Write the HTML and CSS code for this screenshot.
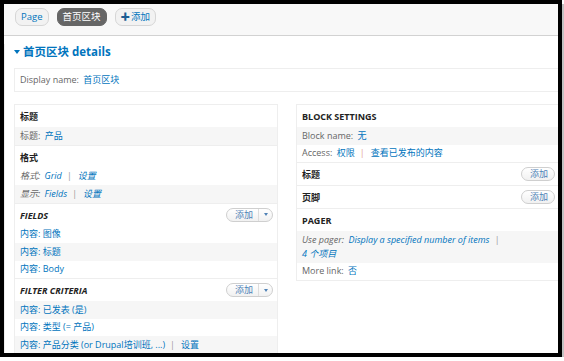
FILE: index.html
```html
<!DOCTYPE html>
<html lang="zh-CN">
<head>
  <meta charset="UTF-8">
  <meta name="viewport" content="width=device-width, initial-scale=1.0">
  <title>首页区块 - Views</title>
  <link rel="stylesheet" href="styles.css">
</head>
<body>
  <div class="frame">
    <div class="tabs">
      <a href="#" class="tab">Page</a>
      <a href="#" class="tab active">首页区块</a>
      <a href="#" class="tab add"><span class="plus">✚</span>添加</a>
    </div>

    <div class="main">
      <h2 class="details-title"><span class="caret"></span>首页区块 details</h2>
      <div class="display-name"><span class="label">Display name:</span> <a href="#">首页区块</a></div>

      <div class="columns">
        <div class="column">
          <div class="section">
            <div class="section-head"><span class="title">标题</span></div>
            <div class="row shade"><span class="label">标题:</span> <a href="#">产品</a></div>
          </div>
          <div class="section">
            <div class="section-head"><span class="title">格式</span></div>
            <div class="row em"><span class="label">格式:</span> <a href="#">Grid</a><span class="sep">|</span><a href="#">设置</a></div>
            <div class="row em shade"><span class="label">显示:</span> <a href="#">Fields</a><span class="sep">|</span><a href="#">设置</a></div>
          </div>
          <div class="section">
            <div class="section-head em">
              <span class="title">FIELDS</span>
              <div class="dropbutton"><a href="#">添加</a><span class="toggle"></span></div>
            </div>
            <div class="row"><a href="#">内容: 图像</a></div>
            <div class="row shade"><a href="#">内容: 标题</a></div>
            <div class="row"><a href="#">内容: Body</a></div>
          </div>
          <div class="section">
            <div class="section-head em">
              <span class="title">FILTER CRITERIA</span>
              <div class="dropbutton"><a href="#">添加</a><span class="toggle"></span></div>
            </div>
            <div class="row shade"><a href="#">内容: 已发表 (是)</a></div>
            <div class="row"><a href="#">内容: 类型 (= 产品)</a></div>
            <div class="row shade"><a href="#">内容: 产品分类 (or Drupal培训班, ...)</a><span class="sep">|</span><a href="#">设置</a></div>
          </div>
        </div>

        <div class="column right">
          <div class="section">
            <div class="section-head"><span class="title">BLOCK SETTINGS</span></div>
            <div class="row shade"><span class="label">Block name:</span> <a href="#">无</a></div>
            <div class="row"><span class="label">Access:</span> <a href="#">权限</a><span class="sep warm">|</span><a href="#">查看已发布的内容</a></div>
          </div>
          <div class="section">
            <div class="section-head">
              <span class="title">标题</span>
              <div class="dropbutton single"><a href="#">添加</a></div>
            </div>
          </div>
          <div class="section">
            <div class="section-head">
              <span class="title">页脚</span>
              <div class="dropbutton single"><a href="#">添加</a></div>
            </div>
          </div>
          <div class="section">
            <div class="section-head"><span class="title">PAGER</span></div>
            <div class="row em shade"><span class="label">Use pager:</span> <a href="#">Display a specified number of items</a><span class="sep">|</span><br><a href="#">4 个项目</a></div>
            <div class="row"><span class="label">More link:</span> <a href="#">否</a></div>
          </div>
        </div>
      </div>
    </div>
  </div>
</body>
</html>
```

FILE: styles.css
```css
body {
  margin: 0;
  background-color: #fff;
  font-family: "Open Sans", "Noto Sans CJK SC", sans-serif;
  font-size: 9px;
  color: #333;
}
a {
  color: #0074bd;
  text-decoration: none;
}
.frame {
  width: 554px;
  height: 349px;
  border: 4px solid #000;
  box-shadow: 4px 4px 0 #c2c2c2;
  background-color: #fff;
  overflow: hidden;
}
.tabs {
  display: flex;
  align-items: flex-start;
  gap: 8px;
  height: 32px;
  box-sizing: border-box;
  padding: 4px 0 0 11px;
  background-color: #f8f8f8;
  border-bottom: 1px solid #d2d2d2;
}
.tab {
  height: 18px;
  box-sizing: border-box;
  padding: 0 5px;
  line-height: 16px;
  font-size: 9.5px;
  border: 1px solid #d6d6d6;
  border-radius: 7px;
  background-color: #f2f2f2;
}
.tab.active {
  background-color: #666;
  border-color: #666;
  color: #fff;
}
.tab.add .plus {
  color: #1d5d93;
  margin-right: 1px;
}
.main {
  padding-left: 9px;
  border-left: 1px solid #ededed;
  height: 100%;
}
.details-title {
  display: flex;
  align-items: center;
  margin: 8px 0 0;
  font-size: 11.5px;
  line-height: 16px;
  font-weight: bold;
  color: #0074bd;
}
.caret {
  width: 0;
  height: 0;
  border-left: 3px solid transparent;
  border-right: 3px solid transparent;
  border-top: 4px solid #0074bd;
  margin-right: 3px;
}
.display-name {
  width: 546px;
  height: 24px;
  box-sizing: border-box;
  margin-top: 8px;
  padding: 0 5px;
  line-height: 22px;
  border: 1px solid #eee;
}
.label {
  color: #666;
  margin-right: 2px;
}
.columns {
  display: flex;
  gap: 18px;
  width: 546px;
  margin-top: 12px;
}
.column {
  flex: none;
  width: 264px;
  box-sizing: border-box;
  border: 1px solid #eee;
  align-self: flex-start;
}
.section + .section {
  border-top: 1px solid #eee;
}
.section-head {
  display: flex;
  align-items: center;
  justify-content: space-between;
  height: 22px;
  padding: 0 4px 0 5px;
  font-weight: bold;
  color: #222;
}
.section-head .title {
  padding-top: 2px;
  line-height: 14px;
}
.em {
  font-style: italic;
}
.row {
  padding: 1.75px 5px;
  line-height: 14px;
}
.row.shade {
  background-color: #f6f6f6;
}
.sep {
  color: #999;
  margin: 0 6px 0 5px;
}
.sep.warm {
  color: #e3a08f;
}
.dropbutton {
  display: flex;
  height: 14px;
  box-sizing: border-box;
  border: 1px solid #cfcfcf;
  border-radius: 7px;
  background: linear-gradient(#fff, #f1f1f1);
  font-style: normal;
  font-weight: normal;
  overflow: hidden;
}
.dropbutton a {
  padding: 0 5px 0 8px;
  line-height: 12px;
  color: #4f82b6;
}
.dropbutton.single a {
  padding: 0 6px 0 8px;
}
.dropbutton .toggle {
  display: flex;
  align-items: center;
  justify-content: center;
  width: 13px;
  border-left: 1px solid #ddd;
}
.dropbutton .toggle::after {
  content: "";
  border-left: 2.5px solid transparent;
  border-right: 2.5px solid transparent;
  border-top: 3px solid #4f82b6;
}
```
